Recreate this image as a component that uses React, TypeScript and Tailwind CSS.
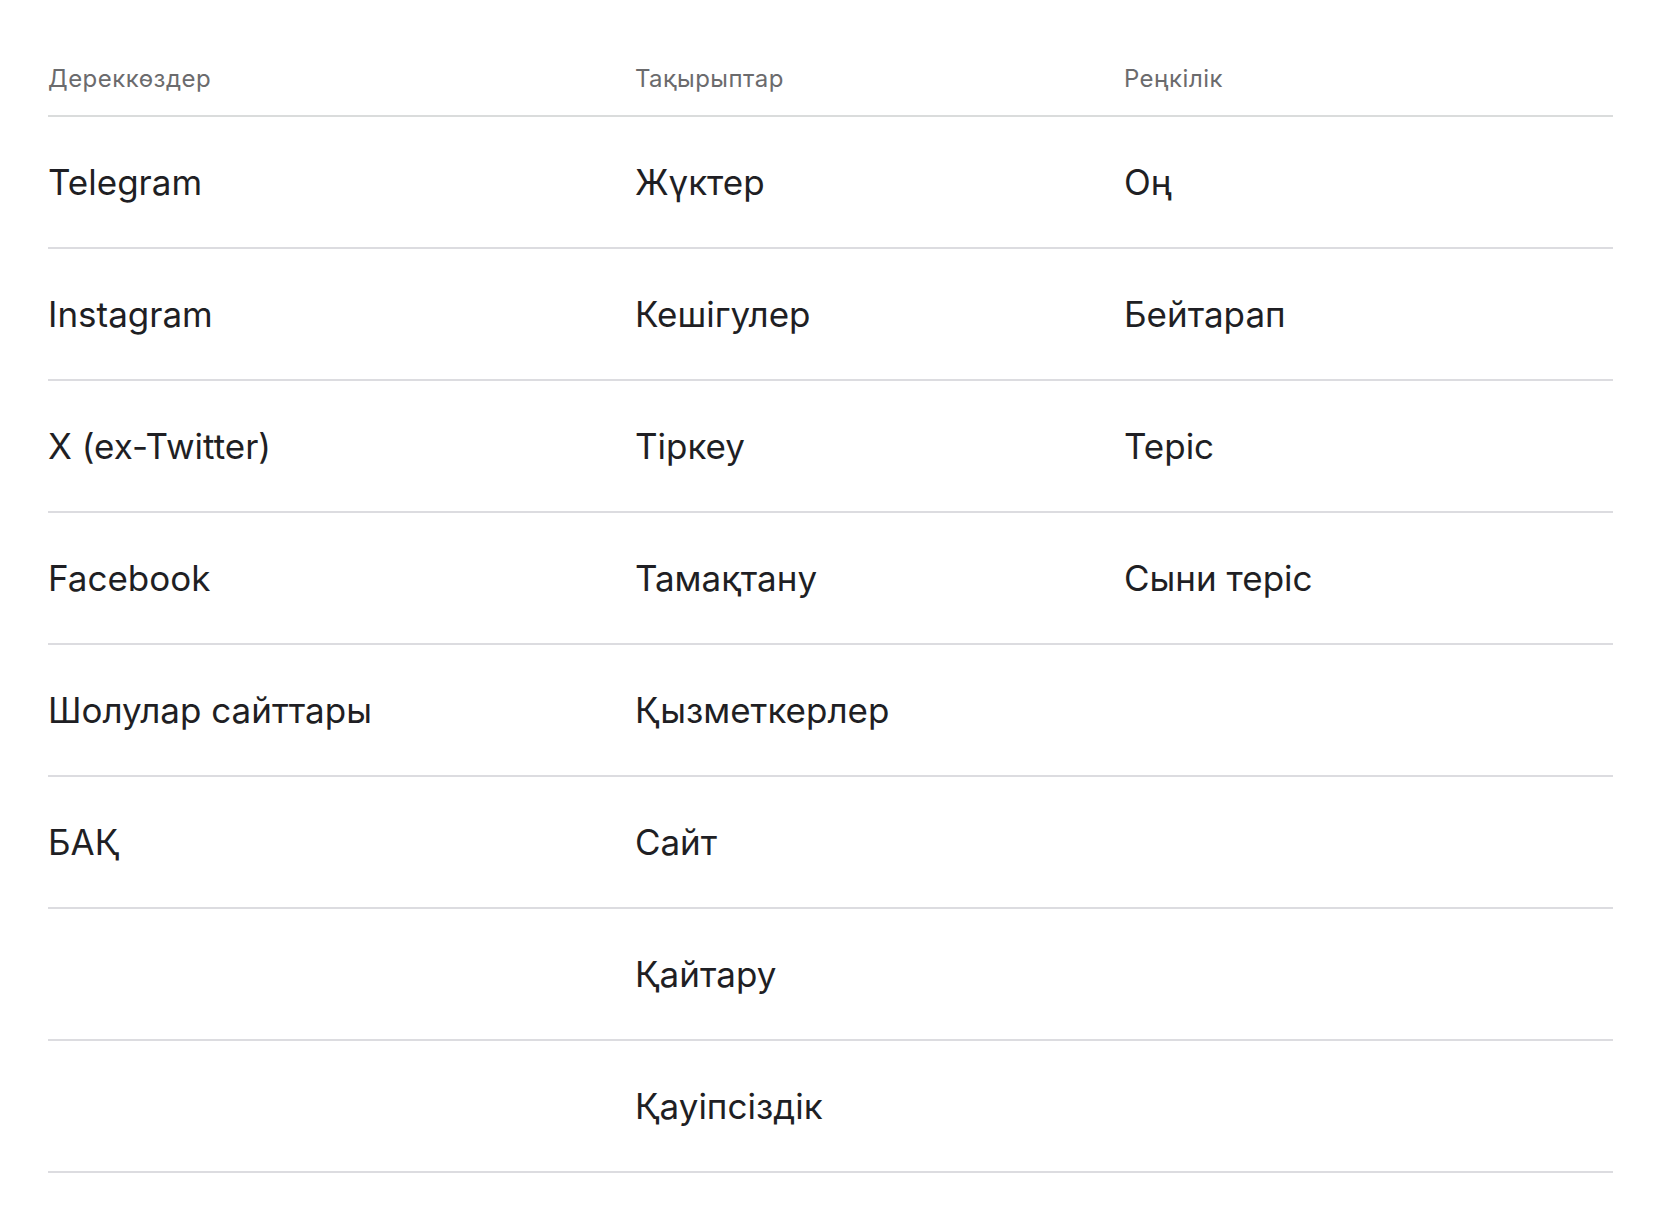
import React from 'react';

const sources = ['Telegram', 'Instagram', 'X (ex-Twitter)', 'Facebook', 'Шолулар сайттары', 'БАҚ', '', ''];
const topics = ['Жүктер', 'Кешігулер', 'Тіркеу', 'Тамақтану', 'Қызметкерлер', 'Сайт', 'Қайтару', 'Қауіпсіздік'];
const tones = ['Оң', 'Бейтарап', 'Теріс', 'Сыни теріс', '', '', '', ''];

const App: React.FC = () => {
  return (
    <div className="min-h-screen bg-white pl-12 pr-[63px] pt-[61px] font-['Inter',sans-serif]">
      <div className="grid grid-cols-[6fr_5fr_5fr] border-b-2 border-[#dadcdc] pb-[18px] text-[24px] leading-[36px] tracking-[0.02em] text-[#6b6b6d]">
        <div>Дереккөздер</div>
        <div>Тақырыптар</div>
        <div>Реңкілік</div>
      </div>

      {topics.map((topic, i) => (
        <div
          key={i}
          className="grid h-[132px] grid-cols-[6fr_5fr_5fr] items-center border-b-2 border-[#dcdce0] text-[35px] text-[#1f1f24]"
        >
          <div>{sources[i]}</div>
          <div>{topic}</div>
          <div>{tones[i]}</div>
        </div>
      ))}
    </div>
  );
};

export default App;
